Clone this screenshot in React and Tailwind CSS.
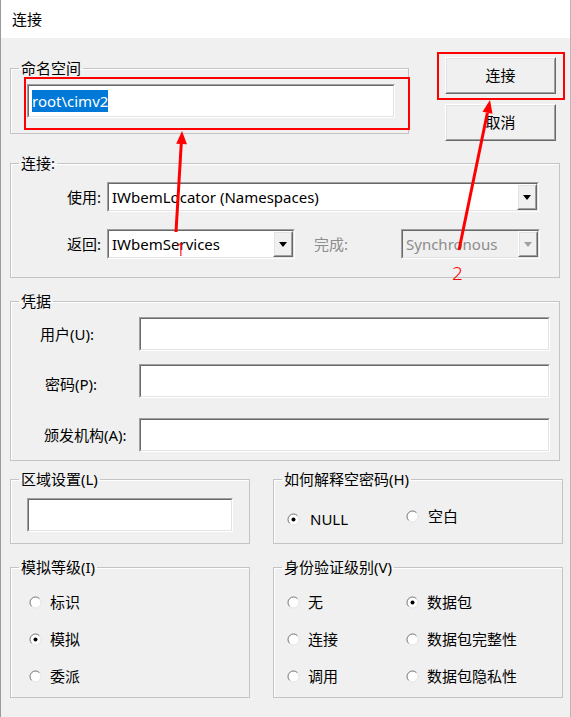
import React from "react"

// sunken edit / combo frame (classic 3D look)
function Field({ className = "", bg = "bg-white", children }) {
  return (
    <div className={`border border-t-[#a0a0a0] border-l-[#a0a0a0] border-r-white border-b-white ${className}`}>
      <div className={`h-full flex items-center border border-t-[#696969] border-l-[#696969] border-r-[#e3e3e3] border-b-[#e3e3e3] ${bg}`}>
        {children}
      </div>
    </div>
  )
}

function Raised({ className = "", children }) {
  return (
    <div className={`border border-t-white border-l-white border-r-[#696969] border-b-[#696969] ${className}`}>
      <div className="h-full flex items-center justify-center border border-t-[#e3e3e3] border-l-[#e3e3e3] border-r-[#a0a0a0] border-b-[#a0a0a0] bg-[#f0f0f0]">
        {children}
      </div>
    </div>
  )
}

function Combo({ text, className, disabled }) {
  return (
    <Field className={className} bg={disabled ? "bg-[#f0f0f0]" : "bg-white"}>
      <span className={`flex-1 pl-[3px] whitespace-nowrap ${disabled ? "text-[#8d8d8d]" : "text-black"}`}>{text}</span>
      <Raised className="h-full w-[20px]">
        <svg width="8" height="5" viewBox="0 0 8 5">
          <path d="M0 0h8L4 5z" fill={disabled ? "#a0a0a0" : "#000"} />
        </svg>
      </Raised>
    </Field>
  )
}

function Radio({ checked, label, className = "gap-[9px]" }) {
  return (
    <div className={`flex items-center h-[20px] ${className}`}>
      <svg width="13" height="13" viewBox="0 0 13 13" className="shrink-0">
        <circle cx="6.5" cy="6.5" r="5.5" fill="#fff" stroke="#e3e3e3" />
        <path d="M2.61 10.39A5.5 5.5 0 0 1 10.39 2.61" fill="none" stroke="#7a7a7a" />
        {checked && <circle cx="6.5" cy="6.5" r="2" fill="#000" />}
      </svg>
      <span>{label}</span>
    </div>
  )
}

function Group({ title, className, children }) {
  return (
    <fieldset className={`border border-[#c4c4c4] shadow-[inset_1px_1px_0_#fff] ${className}`}>
      <legend className="ml-[8px] px-[2px] leading-[20px]">{title}</legend>
      {children}
    </fieldset>
  )
}

export default function App() {
  return (
    <div className="relative w-[571px] h-[717px] bg-[#f0f0f0] border-l border-r border-l-[#9a9a9a] border-r-[#b8b8b8] text-[15px] text-black font-['Noto_Sans','Noto_Sans_CJK_SC',sans-serif] overflow-hidden">
      {/* title bar */}
      <div className="h-[38px] bg-white flex items-center pl-[11px]">连接</div>

      <div className="pl-[9px]">
        {/* namespace + buttons */}
        <div className="flex items-start pt-[19px]">
          <Group title="命名空间" className="mt-[1px] w-[399px] h-[76px]">
            <div className="pt-[6px] pl-[16px]">
              <Field className="w-[368px] h-[34px]">
                <span className="ml-[3px] bg-[#0078d7] text-white leading-[22px]">root\cimv2</span>
              </Field>
            </div>
          </Group>
          <div className="ml-[36px] flex flex-col gap-[10px]">
            <Raised className="w-[111px] h-[37px]">连接</Raised>
            <Raised className="w-[111px] h-[37px]">取消</Raised>
          </div>
        </div>

        {/* connection */}
        <Group title="连接:" className="mt-[12px] w-[550px] h-[125px]">
          <div className="pt-[9px] flex flex-col gap-[17px]">
            <div className="flex items-center">
              <span className="w-[90px] text-right mr-[6px]">使用:</span>
              <Combo className="w-[432px] h-[30px]" text="IWbemLocator (Namespaces)" />
            </div>
            <div className="flex items-center">
              <span className="w-[90px] text-right mr-[6px]">返回:</span>
              <Combo className="w-[188px] h-[30px]" text="IWbemServices" />
              <span className="ml-[19px] w-[87px] text-[#8d8d8d]">完成:</span>
              <Combo className="w-[139px] h-[30px]" text="Synchronous" disabled />
            </div>
          </div>
        </Group>

        {/* credentials */}
        <Group title="凭据" className="mt-[13px] w-[550px] h-[170px]">
          <div className="pt-[6px] flex flex-col">
            <div className="flex items-center">
              <span className="w-[128px] pl-[29px]">用户(U):</span>
              <Field className="w-[411px] h-[34px]" />
            </div>
            <div className="flex items-center mt-[13px]">
              <span className="w-[128px] pl-[34px] pt-[6px]">密码(P):</span>
              <Field className="w-[411px] h-[34px]" />
            </div>
            <div className="flex items-center mt-[20px]">
              <span className="w-[128px] pl-[33px]">颁发机构(A):</span>
              <Field className="w-[411px] h-[34px]" />
            </div>
          </div>
        </Group>

        {/* locale + blank password */}
        <div className="flex mt-[8px] gap-[23px]">
          <Group title="区域设置(L)" className="w-[240px] h-[75px]">
            <div className="pt-[9px] pl-[16px]">
              <Field className="w-[206px] h-[34px]" />
            </div>
          </Group>
          <Group title="如何解释空密码(H)" className="w-[290px] h-[75px]">
            <div className="flex items-start pl-[13px]">
              <Radio checked label="NULL" className="gap-[10px] w-[119px] mt-[20px]" />
              <Radio label="空白" className="gap-[9px] mt-[17px]" />
            </div>
          </Group>
        </div>

        {/* impersonation + auth level */}
        <div className="flex mt-[13px] gap-[23px]">
          <Group title="模拟等级(I)" className="w-[240px] h-[141px]">
            <div className="pt-[15px] pl-[18px] flex flex-col gap-[17px]">
              <Radio label="标识" className="gap-[8px]" />
              <Radio checked label="模拟" className="gap-[8px]" />
              <Radio label="委派" className="gap-[8px]" />
            </div>
          </Group>
          <Group title="身份验证级别(V)" className="w-[290px] h-[141px]">
            <div className="pt-[15px] pl-[13px] grid grid-cols-[119px_1fr] gap-y-[17px]">
              <Radio label="无" className="gap-[8px]" />
              <Radio checked label="数据包" className="gap-[8px]" />
              <Radio label="连接" className="gap-[8px]" />
              <Radio label="数据包完整性" className="gap-[8px]" />
              <Radio label="调用" className="gap-[8px]" />
              <Radio label="数据包隐私性" className="gap-[8px]" />
            </div>
          </Group>
        </div>
      </div>

      {/* red annotations */}
      <div className="absolute left-[23px] top-[77px] w-[386px] h-[53px] border-2 border-[#ff0000]" />
      <div className="absolute left-[436px] top-[52px] w-[128px] h-[48px] border-2 border-[#ff0000]" />
      <svg className="absolute left-0 top-0 pointer-events-none" width="571" height="717" viewBox="0 0 571 717">
        <line x1="175" y1="232" x2="180.3" y2="143" stroke="#ff0000" strokeWidth="3" />
        <polygon points="181,131 186,144.3 175.2,143.7" fill="#ff0000" />
        <line x1="458" y1="250" x2="486.4" y2="112.7" stroke="#ff0000" strokeWidth="3" />
        <polygon points="489,100 491.5,113.7 481.5,111.7" fill="#ff0000" />
      </svg>
      <span className="absolute left-[174px] top-[238px] text-[19px] leading-[22px] font-light text-[#ff0000]">1</span>
      <span className="absolute left-[451px] top-[262px] text-[19px] leading-[22px] font-light text-[#ff0000]">2</span>
    </div>
  )
}
